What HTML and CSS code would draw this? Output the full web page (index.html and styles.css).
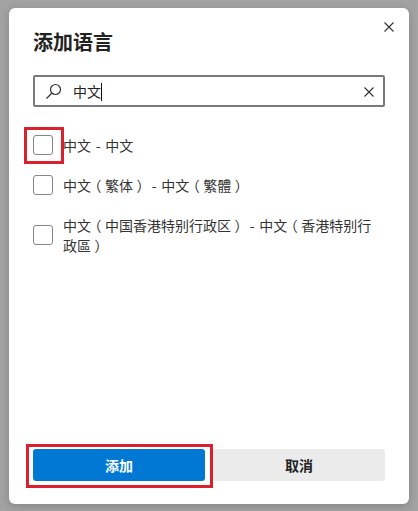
FILE: index.html
```html
<!DOCTYPE html>
<html lang="zh-CN">
<head>
<meta charset="utf-8">
<title>添加语言</title>
<link rel="stylesheet" href="styles.css">
</head>
<body>
<div class="dialog">
  <button class="close" aria-label="关闭">
    <svg width="10" height="10" viewBox="0 0 10 10"><path d="M0.5 0.5 L9.5 9.5 M9.5 0.5 L0.5 9.5" stroke="#333" stroke-width="1.1" fill="none"/></svg>
  </button>
  <h1 class="title">添加语言</h1>
  <div class="search">
    <svg class="search-icon" width="17" height="17" viewBox="0 0 17 17"><circle cx="10.5" cy="6.5" r="5" stroke="#333" stroke-width="1.2" fill="none"/><path d="M7 10 L1.5 15.5" stroke="#333" stroke-width="1.3" fill="none"/></svg>
    <span class="query">中文</span><span class="caret"></span>
    <svg class="clear" width="10" height="10" viewBox="0 0 10 10"><path d="M0.5 0.5 L9.5 9.5 M9.5 0.5 L0.5 9.5" stroke="#333" stroke-width="1.1" fill="none"/></svg>
  </div>
  <ul class="list">
    <li class="row"><span class="box-wrap"><span class="box"></span><span class="mark mark-box"></span></span><span class="label">中文 - 中文</span></li>
    <li class="row"><span class="box-wrap"><span class="box"></span></span><span class="label">中文<span class="p">（</span>繁体<span class="p">）</span> - 中文<span class="p">（</span>繁體<span class="p">）</span></span></li>
    <li class="row"><span class="box-wrap"><span class="box"></span></span><span class="label">中文<span class="p">（</span>中国香港特别行政区<span class="p">）</span> - 中文<span class="p">（</span>香港特别行政區<span class="p">）</span></span></li>
  </ul>
  <div class="actions">
    <div class="btn-wrap"><button class="btn primary">添加</button><span class="mark mark-btn"></span></div>
    <button class="btn secondary">取消</button>
  </div>
</div>
</body>
</html>
```
FILE: styles.css
```css
html, body {
  margin: 0;
  padding: 0;
}
body {
  background: #a2a2a2;
  font-family: "Noto Sans CJK SC", "Microsoft YaHei", sans-serif;
  color: #2b2b2b;
  padding: 8px 9px;
  height: 511px;
  box-sizing: border-box;
}
.dialog {
  position: relative;
  width: 400px;
  height: 496px;
  box-sizing: border-box;
  background: #fff;
  border-radius: 6px;
  box-shadow: 0 2px 8px rgba(0,0,0,0.18);
  padding: 20px 24px 23px;
  display: flex;
  flex-direction: column;
}
.close {
  position: absolute;
  top: 14px;
  right: 15px;
  width: 10px;
  height: 10px;
  padding: 0;
  border: 0;
  background: none;
  display: flex;
}
.title {
  margin: 0;
  font-size: 20px;
  line-height: 28px;
  font-weight: 700;
  color: #222;
}
.search {
  margin-top: 19px;
  height: 32px;
  box-sizing: border-box;
  border: 2px solid #7a7a7a;
  border-radius: 2px;
  display: flex;
  align-items: center;
  padding: 0 9px 0 10px;
}
.search-icon {
  flex: none;
  margin-top: 1px;
}
.query {
  margin-left: 11px;
  font-size: 14px;
  line-height: 20px;
  color: #222;
}
.caret {
  width: 1px;
  height: 18px;
  background: #111;
  margin-top: 1px;
}
.clear {
  margin-left: auto;
  margin-top: 1px;
}
.list {
  list-style: none;
  margin: 18px 0 0;
  padding: 0 3px 0 0;
}
.row {
  display: flex;
  align-items: center;
  gap: 10px;
  padding: 10px 0;
}
.box-wrap {
  position: relative;
  flex: none;
  display: flex;
}
.box {
  width: 20px;
  height: 20px;
  box-sizing: border-box;
  border: 1px solid #858585;
  border-radius: 3px;
  background: #fff;
}
.label {
  flex: 1 1 auto;
  min-width: 0;
  font-size: 14px;
  line-height: 20px;
  color: #333;
  word-spacing: 1.5px;
  text-spacing-trim: space-all;
}
.p {
  font-feature-settings: "halt" 1;
  padding: 0 3.5px;
}
.mark {
  position: absolute;
  border: 3px solid #d9202c;
  box-sizing: border-box;
  pointer-events: none;
}
.mark-box {
  left: -9px;
  top: -8px;
  width: 40px;
  height: 37px;
}
.actions {
  margin-top: auto;
  display: flex;
  gap: 8px;
}
.btn-wrap {
  position: relative;
  flex: 1;
  display: flex;
}
.btn {
  flex: 1;
  height: 32px;
  border: 0;
  border-radius: 3px;
  font-family: inherit;
  font-size: 14px;
  font-weight: 700;
  padding: 0;
}
.primary {
  background: #0078d4;
  color: #fff;
}
.secondary {
  background: #ebebeb;
  color: #222;
}
.mark-btn {
  left: -7px;
  top: -5px;
  right: -8px;
  bottom: -7px;
}
```
